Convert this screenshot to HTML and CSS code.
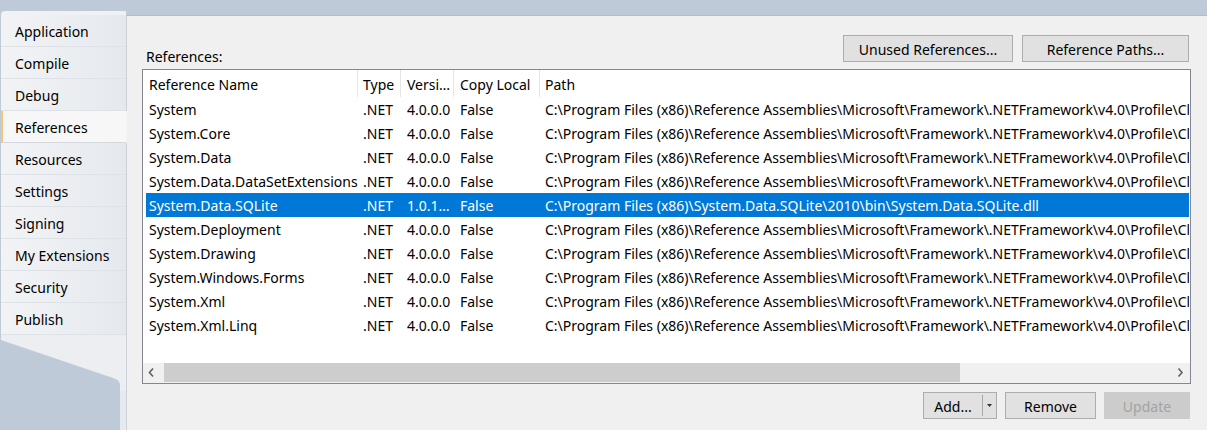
FILE: index.html
```html
<!DOCTYPE html>
<html>
<head>
<meta charset="utf-8">
<title>References</title>
<link rel="stylesheet" href="styles.css">
</head>
<body>
<div class="window">
  <nav class="sidebar">
    <div class="cap"></div>
    <div class="tab">Application</div>
    <div class="tab">Compile</div>
    <div class="tab">Debug</div>
    <div class="tab active">References</div>
    <div class="tab">Resources</div>
    <div class="tab">Settings</div>
    <div class="tab">Signing</div>
    <div class="tab">My Extensions</div>
    <div class="tab">Security</div>
    <div class="tab">Publish</div>
    <div class="tail">
      <svg width="125" height="56" viewBox="0 0 125 56"><path d="M0 0 H125 V56 H119 V50 Q119 45 112 43 L0 5 Z" fill="#eceef2"/></svg>
    </div>
  </nav>
  <main class="panel">
    <div class="toprow">
      <span class="lbl">References:</span>
      <div class="btns">
        <button class="btn btn-unused">Unused References...</button>
        <button class="btn btn-paths">Reference Paths...</button>
      </div>
    </div>
    <div class="list">
      <div class="row hdr">
        <div class="c c1">Reference Name</div>
        <div class="c c2">Type</div>
        <div class="c c3">Versi…</div>
        <div class="c c4">Copy Local</div>
        <div class="c c5">Path</div>
      </div>
      <div class="rows">
        <div class="row"><div class="c c1">System</div><div class="c c2">.NET</div><div class="c c3">4.0.0.0</div><div class="c c4">False</div><div class="c c5">C:\Program Files (x86)\Reference Assemblies\Microsoft\Framework\.NETFramework\v4.0\Profile\Client\System.dll</div></div>
        <div class="row"><div class="c c1">System.Core</div><div class="c c2">.NET</div><div class="c c3">4.0.0.0</div><div class="c c4">False</div><div class="c c5">C:\Program Files (x86)\Reference Assemblies\Microsoft\Framework\.NETFramework\v4.0\Profile\Client\System.Core.dll</div></div>
        <div class="row"><div class="c c1">System.Data</div><div class="c c2">.NET</div><div class="c c3">4.0.0.0</div><div class="c c4">False</div><div class="c c5">C:\Program Files (x86)\Reference Assemblies\Microsoft\Framework\.NETFramework\v4.0\Profile\Client\System.Data.dll</div></div>
        <div class="row"><div class="c c1">System.Data.DataSetExtensions</div><div class="c c2">.NET</div><div class="c c3">4.0.0.0</div><div class="c c4">False</div><div class="c c5">C:\Program Files (x86)\Reference Assemblies\Microsoft\Framework\.NETFramework\v4.0\Profile\Client\System.Data.DataSetExtensions.dll</div></div>
        <div class="row sel"><div class="c c1">System.Data.SQLite</div><div class="c c2">.NET</div><div class="c c3">1.0.1…</div><div class="c c4">False</div><div class="c c5">C:\Program Files (x86)\System.Data.SQLite\2010\bin\System.Data.SQLite.dll</div></div>
        <div class="row"><div class="c c1">System.Deployment</div><div class="c c2">.NET</div><div class="c c3">4.0.0.0</div><div class="c c4">False</div><div class="c c5">C:\Program Files (x86)\Reference Assemblies\Microsoft\Framework\.NETFramework\v4.0\Profile\Client\System.Deployment.dll</div></div>
        <div class="row"><div class="c c1">System.Drawing</div><div class="c c2">.NET</div><div class="c c3">4.0.0.0</div><div class="c c4">False</div><div class="c c5">C:\Program Files (x86)\Reference Assemblies\Microsoft\Framework\.NETFramework\v4.0\Profile\Client\System.Drawing.dll</div></div>
        <div class="row"><div class="c c1">System.Windows.Forms</div><div class="c c2">.NET</div><div class="c c3">4.0.0.0</div><div class="c c4">False</div><div class="c c5">C:\Program Files (x86)\Reference Assemblies\Microsoft\Framework\.NETFramework\v4.0\Profile\Client\System.Windows.Forms.dll</div></div>
        <div class="row"><div class="c c1">System.Xml</div><div class="c c2">.NET</div><div class="c c3">4.0.0.0</div><div class="c c4">False</div><div class="c c5">C:\Program Files (x86)\Reference Assemblies\Microsoft\Framework\.NETFramework\v4.0\Profile\Client\System.Xml.dll</div></div>
        <div class="row"><div class="c c1">System.Xml.Linq</div><div class="c c2">.NET</div><div class="c c3">4.0.0.0</div><div class="c c4">False</div><div class="c c5">C:\Program Files (x86)\Reference Assemblies\Microsoft\Framework\.NETFramework\v4.0\Profile\Client\System.Xml.Linq.dll</div></div>
      </div>
      <div class="hscroll">
        <div class="arrow"><svg width="20" height="20" viewBox="0 0 20 20"><path d="M10 5.5 L6.5 9.5 L10 13.5" fill="none" stroke="#606060" stroke-width="1.6"/></svg></div>
        <div class="track"><div class="thumb"></div></div>
        <div class="arrow"><svg width="20" height="20" viewBox="0 0 20 20"><path d="M8.5 5.5 L12 9.5 L8.5 13.5" fill="none" stroke="#606060" stroke-width="1.6"/></svg></div>
      </div>
    </div>
    <div class="bottom">
      <div class="btn split">
        <span class="split-main">Add...</span>
        <span class="split-drop"><svg width="5" height="3" viewBox="0 0 5 3"><path d="M0 0 H5 L2.5 3 Z" fill="#333"/></svg></span>
      </div>
      <button class="btn btn-remove">Remove</button>
      <button class="btn btn-update" disabled>Update</button>
    </div>
  </main>
</div>
</body>
</html>
```

FILE: styles.css
```css
* { box-sizing: border-box; margin: 0; padding: 0; }
html, body { height: 100%; }
body {
  background: #bfcad9;
  font-family: "Noto Sans", "Open Sans", sans-serif;
  font-size: 14px;
  color: #000;
  overflow: hidden;
}
.window { display: flex; height: 430px; padding-top: 11px; }

.sidebar { width: 125px; margin-left: 1px; display: flex; flex-direction: column; }
.cap { height: 4px; background: #eff1f4; border-top-left-radius: 5px; }
.tab {
  height: 32px;
  line-height: 33px;
  padding-left: 14px;
  background: linear-gradient(to right, #f2f3f5, #e5e9ee);
  border-bottom: 1px solid #dde2e8;
  position: relative;
  white-space: nowrap;
  overflow: hidden;
}
.tab.active {
  background: #f7f7f7;
  border-left: 2px solid #f2c878;
  padding-left: 12px;
  border-bottom-color: #d3d8df;
  overflow: visible;
}
.tab.active::after {
  content: "";
  position: absolute;
  right: -1px; top: 0; bottom: -1px;
  width: 1px;
  background: #f3f3f3;
}
.tail {
  flex: 1;
  background: linear-gradient(to right, transparent 119px, #e6e9ee 119px);
}
.tail svg { display: block; }

.panel {
  flex: 1;
  margin-top: 4px;
  background: #f0f0f0;
  border-top: 1px solid #b3bcc8;
  border-left: 1px solid #cbd1d9;
  padding: 19px 16px 0 15px;
  display: flex;
  flex-direction: column;
}
.toprow { height: 34px; display: flex; justify-content: space-between; }
.lbl { align-self: flex-end; line-height: 20px; margin-bottom: 2px; padding-left: 4px; }
.btns { display: flex; gap: 9px; margin-right: 2px; height: 27px; }

.btn {
  height: 27px;
  padding-top: 2px;
  border: 1px solid #adadad;
  background: #e1e1e1;
  font: inherit;
  color: #000;
  text-align: center;
}
.btn-unused { width: 170px; }
.btn-paths { width: 167px; }

.list {
  height: 315px;
  border: 1px solid #828790;
  background: #fff;
  display: flex;
  flex-direction: column;
  overflow: hidden;
}
.row {
  display: grid;
  grid-template-columns: 212px 43px 53px 86px minmax(0, 1fr);
  height: 24px;
  line-height: 26px;
  margin: 0 1px 0 3px;
  white-space: nowrap;
  overflow: hidden;
}
.row.hdr { height: 27px; line-height: 29px; }
.hdr .c { border-right: 1px solid #e5e5e5; }
.hdr .c5 { border-right: 0; }
.c { overflow: hidden; white-space: nowrap; }
.c1 { padding-left: 3px; }
.c2 { padding-left: 5px; }
.c3 { padding-left: 6px; }
.c4 { padding-left: 6px; }
.c5 { padding-left: 5px; }
.row.sel { background: #0078d7; color: #fff; }
.rows { flex: 1; }

.hscroll { height: 20px; display: flex; background: #f0f0f0; }
.arrow { width: 20px; height: 20px; }
.arrow svg { display: block; }
.track { flex: 1; }
.thumb { width: 796px; height: 19px; margin-left: 1px; background: #cdcdcd; }

.bottom { display: flex; justify-content: flex-end; gap: 8px; margin-top: 8px; margin-right: 1px; }
.split { display: flex; width: 74px; padding-top: 0; }
.split-main { width: 59px; border-right: 1px solid #a8a8a8; margin: 2px 0; line-height: 23px; }
.split-drop { flex: 1; display: flex; align-items: center; justify-content: center; }
.split-drop svg { display: block; }
.btn-remove { width: 91px; }
.btn-update { width: 86px; background: #cccccc; border-color: #cccccc; color: #a3a3a3; }
```
